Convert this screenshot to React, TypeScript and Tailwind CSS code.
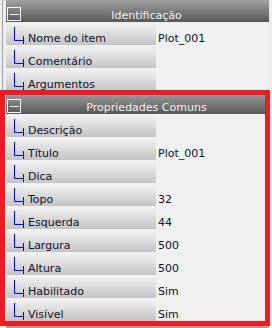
import React from "react";

type Row = { label: string; value: string };

const sec1: Row[] = [
  { label: "Nome do item", value: "Plot_001" },
  { label: "Comentário", value: "" },
  { label: "Argumentos", value: "" },
];

const sec2: Row[] = [
  { label: "Descrição", value: "" },
  { label: "Título", value: "Plot_001" },
  { label: "Dica", value: "" },
  { label: "Topo", value: "32" },
  { label: "Esquerda", value: "44" },
  { label: "Largura", value: "500" },
  { label: "Altura", value: "500" },
  { label: "Habilitado", value: "Sim" },
  { label: "Visível", value: "Sim" },
];

function Header({ title }: { title: string }) {
  return (
    <div className="h-[22px] flex items-start bg-gradient-to-b from-[#a2a2a2] to-[#585858]">
      <svg width="14" height="14" className="shrink-0 ml-[1px] mt-[7px]">
        <rect x="0.5" y="0.5" width="13" height="13" fill="none" stroke="#f4f4f4" strokeWidth="1" />
        <path d="M3 7.5H12" stroke="#f4f4f4" strokeWidth="1" />
      </svg>
      <span className="flex-1 ml-[3px] text-center mt-[9px] leading-[13px] text-[#f2f2f2]">{title}</span>
    </div>
  );
}

function PropRow({ row }: { row: Row }) {
  return (
    <div className="h-[22px] flex">
      <div className="w-[150px] shrink-0 flex items-start bg-gradient-to-b from-[#f2f2f2] to-[#c4c4c4]">
        <svg width="22" height="22" className="shrink-0">
          <path d="M8.5 4V17.5H17" stroke="#0000ff" strokeWidth="1" fill="none" />
          <path d="M17.5 13V21" stroke="#0000ff" strokeWidth="1" />
        </svg>
        <span className="mt-[9px] leading-[13px] text-[#10102a] whitespace-nowrap">{row.label}</span>
      </div>
      <div className="flex-1 pl-[2px] bg-[#f0f0f0]">
        <span className="block mt-[9px] leading-[13px] text-[#10102a] whitespace-nowrap">{row.value}</span>
      </div>
    </div>
  );
}

export default function App() {
  return (
    <div className="relative w-[272px] h-[328px] overflow-hidden bg-[#f0f0f0] font-['DejaVu_Sans',Verdana,sans-serif] text-[11px]">
      <div className="flex h-[326px]">
        <div className="w-[6px] shrink-0 bg-[#ececec] flex">
          <div className="ml-[2px] w-px h-full bg-[#a4a4a4]" />
        </div>
        <div className="w-[263px] shrink-0 flex flex-col gap-px bg-[#f0f0f0]">
          <Header title="Identificação" />
          {sec1.map((r) => (
            <PropRow key={r.label} row={r} />
          ))}
          <Header title="Propriedades Comuns" />
          {sec2.map((r) => (
            <PropRow key={r.label} row={r} />
          ))}
        </div>
        <div className="flex-1 bg-[#ececec]" />
      </div>
      <div className="h-[2px] ml-[6px] w-[263px] bg-[#a0a0a0]" />
      <div className="absolute left-0 top-[90px] w-[270px] h-[236px] border-[5px] border-[#ed1c24] pointer-events-none" />
    </div>
  );
}
